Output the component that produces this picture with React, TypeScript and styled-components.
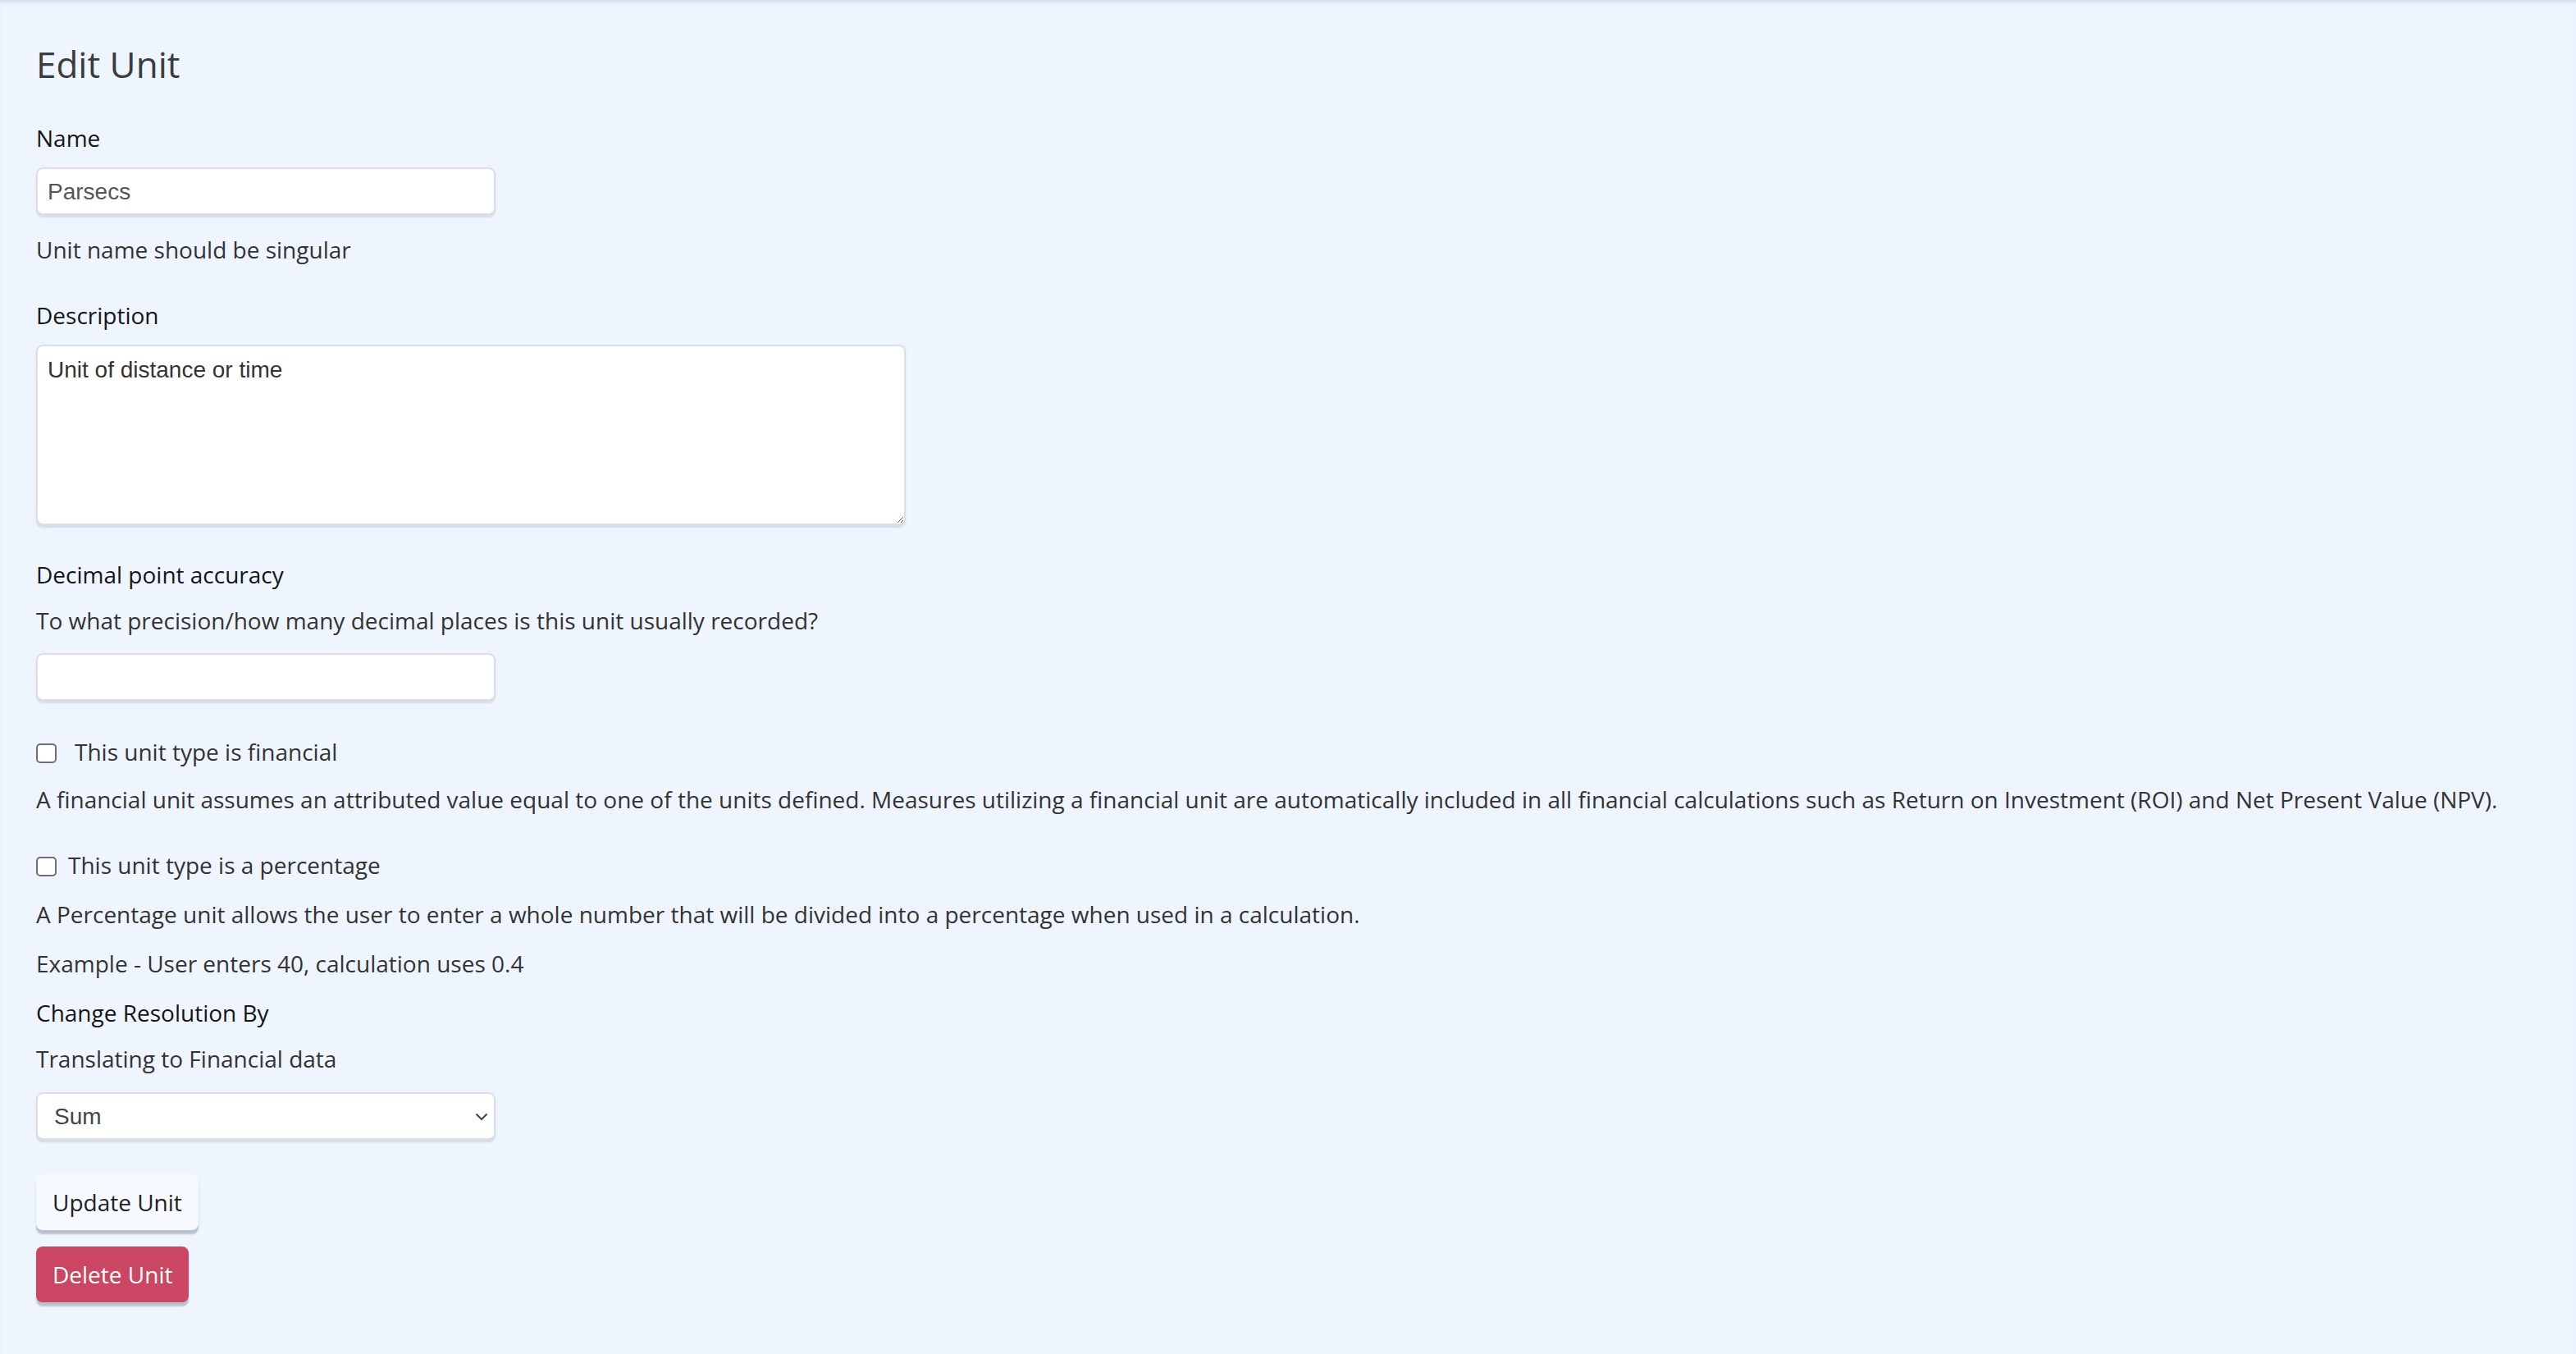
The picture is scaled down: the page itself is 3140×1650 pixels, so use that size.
import React from "react";
import styled, { createGlobalStyle } from "styled-components";

const Global = createGlobalStyle`
  html, body { margin: 0; padding: 0; background: #eef5ff; }
  body { font-family: "Open Sans", "Noto Sans", sans-serif; }
  * { box-sizing: border-box; }
`;

const Page = styled.main`
  min-height: 1650px;
  padding: 52px 44px 60px;
  background: #eef5ff;
  box-shadow: inset 0 5px 5px -3px rgba(150, 160, 180, 0.35);
`;

const Title = styled.h1`
  margin: 0;
  font-size: 44px;
  line-height: 53px;
  font-weight: 400;
  color: #3b3b3b;
`;

const Form = styled.form`
  display: flex;
  flex-direction: column;
  align-items: flex-start;
`;

const Label = styled.label<{ $top: number }>`
  display: block;
  margin-top: ${(p) => p.$top}px;
  font-size: 28px;
  line-height: 42px;
  color: #151515;
`;

const Help = styled.p<{ $top: number }>`
  margin: ${(p) => p.$top}px 0 0;
  font-size: 28px;
  line-height: 42px;
  color: #333;
`;

const fieldBase = `
  background: #fff;
  border: 2px solid #dcdee3;
  border-radius: 8px;
  box-shadow: 0 3px 2px rgba(120, 130, 150, 0.22);
  outline: none;
  font-family: "Liberation Sans", Arial, sans-serif;
  font-size: 28px;
`;

const TextInput = styled.input<{ $top: number }>`
  ${fieldBase}
  margin-top: ${(p) => p.$top}px;
  width: 560px;
  height: 58px;
  padding: 2px 12px 0;
  color: #555;
`;

const TextArea = styled.textarea`
  ${fieldBase}
  margin-top: 15px;
  width: 1060px;
  height: 220px;
  padding: 12px 12px;
  color: #333;
  line-height: 1.2;
  resize: both;
`;

const CheckRow = styled.label<{ $top: number; $gap: number }>`
  display: flex;
  align-items: center;
  gap: ${(p) => p.$gap}px;
  margin-top: ${(p) => p.$top}px;
  font-size: 28px;
  line-height: 42px;
  color: #333;
`;

const Check = styled.input.attrs({ type: "checkbox" })`
  appearance: none;
  margin: 3px 0 0;
  width: 25px;
  height: 24px;
  border: 2px solid #6f6f6f;
  border-radius: 5px;
  background: #fff;
`;

const SelectWrap = styled.div`
  position: relative;
  margin-top: 20px;
  width: 560px;
`;

const Select = styled.select`
  ${fieldBase}
  appearance: none;
  width: 100%;
  height: 58px;
  padding: 0 20px;
  color: #444;
`;

const Chevron = styled.svg`
  position: absolute;
  right: 9px;
  top: 25px;
  width: 16px;
  height: 10px;
  pointer-events: none;
`;

const Button = styled.button<{ $danger?: boolean; $top: number }>`
  margin-top: ${(p) => p.$top}px;
  height: 68px;
  padding: 0 20px;
  border: none;
  border-radius: 8px;
  font-family: "Open Sans", sans-serif;
  font-size: 28px;
  background: ${(p) => (p.$danger ? "#cb4662" : "#f6f9ff")};
  color: ${(p) => (p.$danger ? "#fff" : "#222")};
  box-shadow: 0 5px 2px rgba(150, 158, 172, 0.6);
  cursor: pointer;
`;

export default function App() {
  return (
    <>
      <Global />
      <Page>
        <Title>Edit Unit</Title>
        <Form onSubmit={(e) => e.preventDefault()}>
          <Label $top={42}>Name</Label>
          <TextInput $top={15} defaultValue="Parsecs" />
          <Help $top={21}>Unit name should be singular</Help>

          <Label $top={38}>Description</Label>
          <TextArea defaultValue="Unit of distance or time" />

          <Label $top={39}>Decimal point accuracy</Label>
          <Help $top={14}>To what precision/how many decimal places is this unit usually recorded?</Help>
          <TextInput $top={19} />

          <CheckRow $top={41} $gap={22}>
            <Check />
            This unit type is financial
          </CheckRow>
          <Help $top={16}>
            A financial unit assumes an attributed value equal to one of the units defined. Measures utilizing a
            financial unit are automatically included in all financial calculations such as Return on Investment
            (ROI) and Net Present Value (NPV).
          </Help>

          <CheckRow $top={38} $gap={14}>
            <Check />
            This unit type is a percentage
          </CheckRow>
          <Help $top={18}>
            A Percentage unit allows the user to enter a whole number that will be divided into a percentage when
            used in a calculation.
          </Help>
          <Help $top={18}>Example - User enters 40, calculation uses 0.4</Help>

          <Label $top={18}>Change Resolution By</Label>
          <Help $top={14}>Translating to Financial data</Help>
          <SelectWrap>
            <Select defaultValue="sum">
              <option value="sum">Sum</option>
              <option value="average">Average</option>
            </Select>
            <Chevron viewBox="0 0 16 10">
              <path d="M1.5 1.5 L8 8 L14.5 1.5" fill="none" stroke="#444" strokeWidth="2" />
            </Chevron>
          </SelectWrap>

          <Button type="submit" $top={42}>Update Unit</Button>
          <Button type="button" $danger $top={20}>Delete Unit</Button>
        </Form>
      </Page>
    </>
  );
}
